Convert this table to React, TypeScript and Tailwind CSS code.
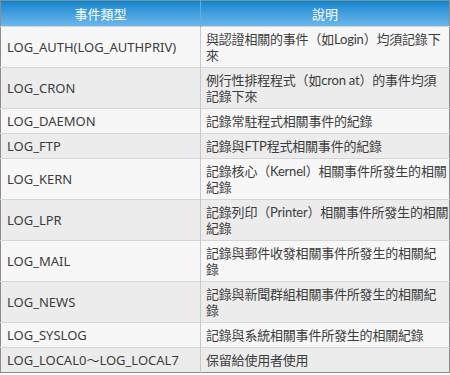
import React from 'react';

// line breaks follow the reference's wrapping
const rows: [string, string][] = [
  ['LOG_AUTH(LOG_AUTHPRIV)', '與認證相關的事件（如Login）均須記錄下\n來'],
  ['LOG_CRON', '例行性排程程式（如cron at）的事件均須\n記錄下來'],
  ['LOG_DAEMON', '記錄常駐程式相關事件的紀錄'],
  ['LOG_FTP', '記錄與FTP程式相關事件的紀錄'],
  ['LOG_KERN', '記錄核心（Kernel）相關事件所發生的相關\n紀錄'],
  ['LOG_LPR', '記錄列印（Printer）相關事件所發生的相關\n紀錄'],
  ['LOG_MAIL', '記錄與郵件收發相關事件所發生的相關紀\n錄'],
  ['LOG_NEWS', '記錄與新聞群組相關事件所發生的相關紀\n錄'],
  ['LOG_SYSLOG', '記錄與系統相關事件所發生的相關紀錄'],
  ['LOG_LOCAL0～LOG_LOCAL7', '保留給使用者使用'],
];

export default function App() {
  return (
    <div
      className="w-[450px] h-[375px] bg-white"
      style={{ fontFamily: '"Noto Sans", "Noto Sans CJK TC", sans-serif' }}
    >
      <table className="w-[450px] table-fixed border-collapse border border-[#8c8c8c] text-[13px] leading-[16px] text-[#3c3c3c]">
        <thead>
          <tr className="h-[26px] bg-gradient-to-b from-[#0386d0] to-[#6cb9ea] text-white">
            <th className="w-[200px] border-r border-[#5fb0e2] font-normal text-center">事件類型</th>
            <th className="font-normal text-center">說明</th>
          </tr>
        </thead>
        <tbody>
          {rows.map(([name, desc], i) => (
            <tr
              key={name}
              className={
                'border-t border-[#d6d6d6] ' + (i % 2 === 0 ? 'bg-[#f7f7f7]' : 'bg-[#ececec]')
              }
            >
              <td className="border-r border-[#c8c8c8] px-[6px] py-[4px] align-middle">{name}</td>
              <td className="pl-[5px] pr-0 py-[4px] align-middle whitespace-pre-line tracking-[-0.2px] font-['Lato','Noto_Sans_CJK_TC',sans-serif]">
                {desc}
              </td>
            </tr>
          ))}
        </tbody>
      </table>
    </div>
  );
}
